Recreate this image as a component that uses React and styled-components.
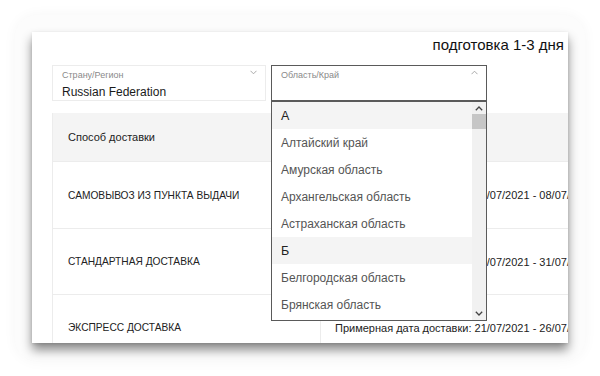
import React from "react";
import styled, { createGlobalStyle } from "styled-components";

const Global = createGlobalStyle`
  html, body {
    margin: 0;
    padding: 0;
    background: #ffffff;
    font-family: "Liberation Sans", Arial, sans-serif;
  }
`;

const Stage = styled.div`
  width: 600px;
  height: 376px;
  padding: 15px;
  box-sizing: border-box;
`;

const Glow = styled.div`
  height: 100%;
  border-radius: 22px;
  background: #fcfcfc;
  box-shadow: 0 0 14px rgba(0, 0, 0, 0.04);
  padding: 17px 17px 0 17px;
  box-sizing: border-box;
`;

const Card = styled.div`
  position: relative;
  width: 536px;
  height: 311px;
  background: #fff;
  overflow: hidden;
  box-shadow: 0 7px 10px rgba(0, 0, 0, 0.45), 0 1px 3px rgba(0, 0, 0, 0.12);
  padding: 3px 4px 0 20px;
  box-sizing: border-box;
`;

const Title = styled.div`
  text-align: right;
  font-size: 15px;
  line-height: 20px;
  color: #111;
  height: 30px;
`;

const Fields = styled.div`
  display: flex;
  gap: 5px;
  margin-bottom: 12px;
`;

const Field = styled.div`
  position: relative;
  width: ${(p) => p.w}px;
  height: 36px;
  box-sizing: border-box;
  border: 1px solid ${(p) => (p.open ? "#5a5a5a" : "#ececec")};
  padding: 4px 9px 0 9px;
`;

const Label = styled.div`
  font-size: 9px;
  color: #8a8a8a;
  line-height: 11px;
`;

const Value = styled.div`
  margin-top: 4px;
  font-size: 12px;
  color: #1a1a1a;
  line-height: 14px;
`;

const Chevron = styled.svg`
  position: absolute;
  top: 4px;
  right: 8px;
  width: 7px;
  height: 5px;
`;

const Dropdown = styled.div`
  position: absolute;
  z-index: 2;
  top: 35px;
  left: -1px;
  width: 216px;
  height: 220px;
  box-sizing: border-box;
  border: 1px solid #5a5a5a;
  background: #fff;
  display: flex;
`;

const Options = styled.div`
  flex: 1;
  overflow: hidden;
`;

const Option = styled.div`
  height: 27px;
  display: flex;
  align-items: center;
  padding-left: 9px;
  font-size: ${(p) => (p.group ? "12.5px" : "12px")};
  color: ${(p) => (p.group ? "#222" : "#555")};
  background: ${(p) => (p.group ? "#f4f4f4" : "#fff")};
`;

const Track = styled.div`
  width: 14px;
  background: #f1f1f1;
  display: flex;
  flex-direction: column;
  align-items: center;
`;

const Arrow = styled.svg`
  width: 8px;
  height: 5px;
  margin: ${(p) => p.m};
`;

const Thumb = styled.div`
  width: 14px;
  height: 15px;
  background: #c6c6c6;
`;

const Spacer = styled.div`
  flex: 1;
`;

const Table = styled.div`
  width: 620px;
  border-left: 1px solid #ececec;
`;

const Row = styled.div`
  display: grid;
  grid-template-columns: 267px 1fr;
  height: ${(p) => p.h}px;
  background: ${(p) => (p.head ? "#f4f4f4" : "#fff")};
  border-bottom: 1px solid #ececec;
  box-sizing: border-box;
`;

const Cell = styled.div`
  display: flex;
  align-items: center;
  padding-left: ${(p) => (p.second ? 14 : 15)}px;
  font-size: ${(p) => (p.caps ? "10.2px" : "11px")};
  color: #222;
  white-space: nowrap;
  border-left: ${(p) => (p.second && !p.head ? "1px solid #ececec" : "none")};
`;

const Down = () => (
  <Chevron viewBox="0 0 7 5">
    <polyline points="0.5,0.8 3.5,3.8 6.5,0.8" fill="none" stroke="#a0a0a0" strokeWidth="0.9" />
  </Chevron>
);

const Up = () => (
  <Chevron viewBox="0 0 7 5">
    <polyline points="0.5,4.2 3.5,1.2 6.5,4.2" fill="none" stroke="#a0a0a0" strokeWidth="0.9" />
  </Chevron>
);

const regions = [
  { t: "А", group: true },
  { t: "Алтайский край" },
  { t: "Амурская область" },
  { t: "Архангельская область" },
  { t: "Астраханская область" },
  { t: "Б", group: true },
  { t: "Белгородская область" },
  { t: "Брянская область" },
  { t: "Владимирская область" },
];

const rows = [
  { name: "САМОВЫВОЗ ИЗ ПУНКТА ВЫДАЧИ", date: "Примерная дата доставки: 06/07/2021 - 08/07/2021", h: 67 },
  { name: "СТАНДАРТНАЯ ДОСТАВКА", date: "Примерная дата доставки: 26/07/2021 - 31/07/2021", h: 66 },
  { name: "ЭКСПРЕСС ДОСТАВКА", date: "Примерная дата доставки: 21/07/2021 - 26/07/2021", h: 66 },
];

export default function App() {
  return (
    <Stage>
      <Global />
      <Glow>
        <Card>
          <Title>подготовка 1-3 дня</Title>
          <Fields>
            <Field w={214}>
              <Label>Страну/Регион</Label>
              <Value>Russian Federation</Value>
              <Down />
            </Field>
            <Field w={216} open>
              <Label>Область/Край</Label>
              <Up />
              <Dropdown>
                <Options>
                  {regions.map((r) => (
                    <Option key={r.t} group={r.group}>
                      {r.t}
                    </Option>
                  ))}
                </Options>
                <Track>
                  <Arrow viewBox="0 0 8 5" m="4px 0 3px">
                    <polyline points="0.8,4.2 4,1 7.2,4.2" fill="none" stroke="#444" strokeWidth="1.3" />
                  </Arrow>
                  <Thumb />
                  <Spacer />
                  <Arrow viewBox="0 0 8 5" m="0 0 4px">
                    <polyline points="0.8,0.8 4,4 7.2,0.8" fill="none" stroke="#444" strokeWidth="1.3" />
                  </Arrow>
                </Track>
              </Dropdown>
            </Field>
          </Fields>
          <Table>
            <Row head h={49}>
              <Cell head>Способ доставки</Cell>
              <Cell head second />
            </Row>
            {rows.map((r) => (
              <Row key={r.name} h={r.h}>
                <Cell caps>{r.name}</Cell>
                <Cell second>{r.date}</Cell>
              </Row>
            ))}
          </Table>
        </Card>
      </Glow>
    </Stage>
  );
}
